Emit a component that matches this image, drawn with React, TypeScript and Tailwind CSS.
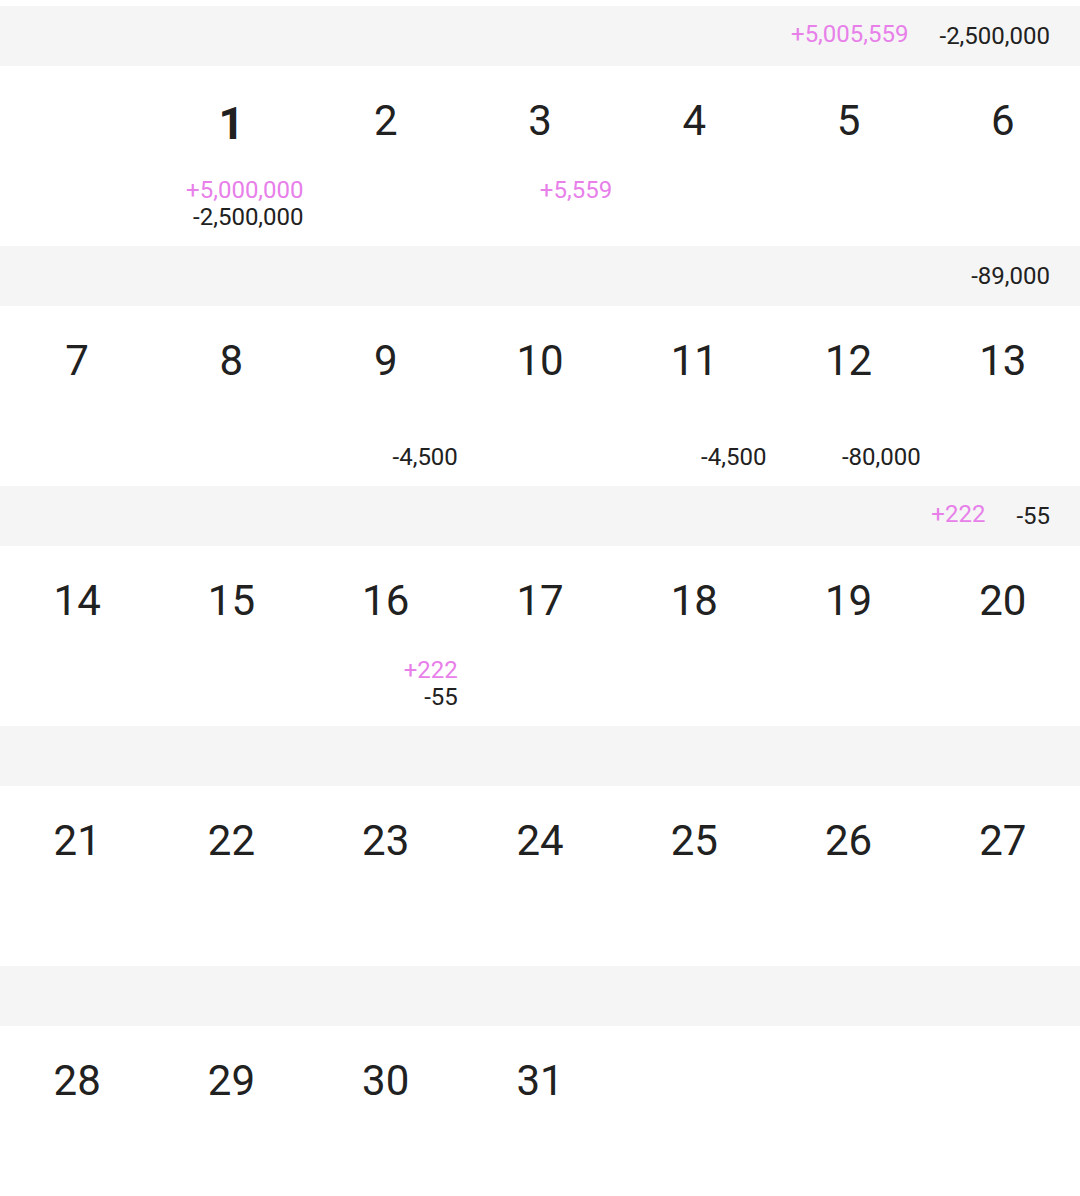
import React from "react";

type Cell = { day?: number; inc?: string; exp?: string; bold?: boolean };
type Week = { inc?: string; exp?: string; cells: Cell[] };

const weeks: Week[] = [
  {
    inc: "+5,005,559",
    exp: "-2,500,000",
    cells: [
      {},
      { day: 1, inc: "+5,000,000", exp: "-2,500,000", bold: true },
      { day: 2 },
      { day: 3, inc: "+5,559" },
      { day: 4 },
      { day: 5 },
      { day: 6 },
    ],
  },
  {
    exp: "-89,000",
    cells: [
      { day: 7 },
      { day: 8 },
      { day: 9, exp: "-4,500" },
      { day: 10 },
      { day: 11, exp: "-4,500" },
      { day: 12, exp: "-80,000" },
      { day: 13 },
    ],
  },
  {
    inc: "+222",
    exp: "-55",
    cells: [
      { day: 14 },
      { day: 15 },
      { day: 16, inc: "+222", exp: "-55" },
      { day: 17 },
      { day: 18 },
      { day: 19 },
      { day: 20 },
    ],
  },
  {
    cells: [21, 22, 23, 24, 25, 26, 27].map((d) => ({ day: d })),
  },
  {
    cells: [{ day: 28 }, { day: 29 }, { day: 30 }, { day: 31 }, {}, {}, {}],
  },
];

export default function App() {
  return (
    <div
      className="w-[1080px] h-[1196px] bg-white overflow-hidden pt-[6px] text-[#212121]"
      style={{ fontFamily: "Roboto, 'Noto Sans', sans-serif" }}
    >
      {weeks.map((w, i) => (
        <div key={i}>
          <div className="h-[60px] bg-[#f5f5f5] flex items-center justify-end pr-[30px] gap-[31px]">
            {w.inc && (
              <span className="text-[24px] leading-none text-[#e880ea] -mt-[5px]">{w.inc}</span>
            )}
            {w.exp && <span className="text-[24px] leading-none">{w.exp}</span>}
          </div>
          <div className="h-[180px] grid grid-cols-7">
            {w.cells.map((c, j) => (
              <div key={j} className="flex flex-col">
                <div className="h-[111px] flex items-center justify-center pb-[2px]">
                  {c.day !== undefined && (
                    <span
                      className={
                        c.bold
                          ? "text-[45px] font-bold leading-none mt-[6px]"
                          : "text-[42px] leading-none"
                      }
                    >
                      {c.day}
                    </span>
                  )}
                </div>
                <div className="flex flex-col items-end pr-[5px]">
                  <span className="text-[24px] leading-[27px] h-[27px] text-[#e880ea]">
                    {c.inc ?? "\u00a0"}
                  </span>
                  <span className="text-[24px] leading-[27px] h-[27px]">{c.exp ?? "\u00a0"}</span>
                </div>
              </div>
            ))}
          </div>
        </div>
      ))}
    </div>
  );
}
